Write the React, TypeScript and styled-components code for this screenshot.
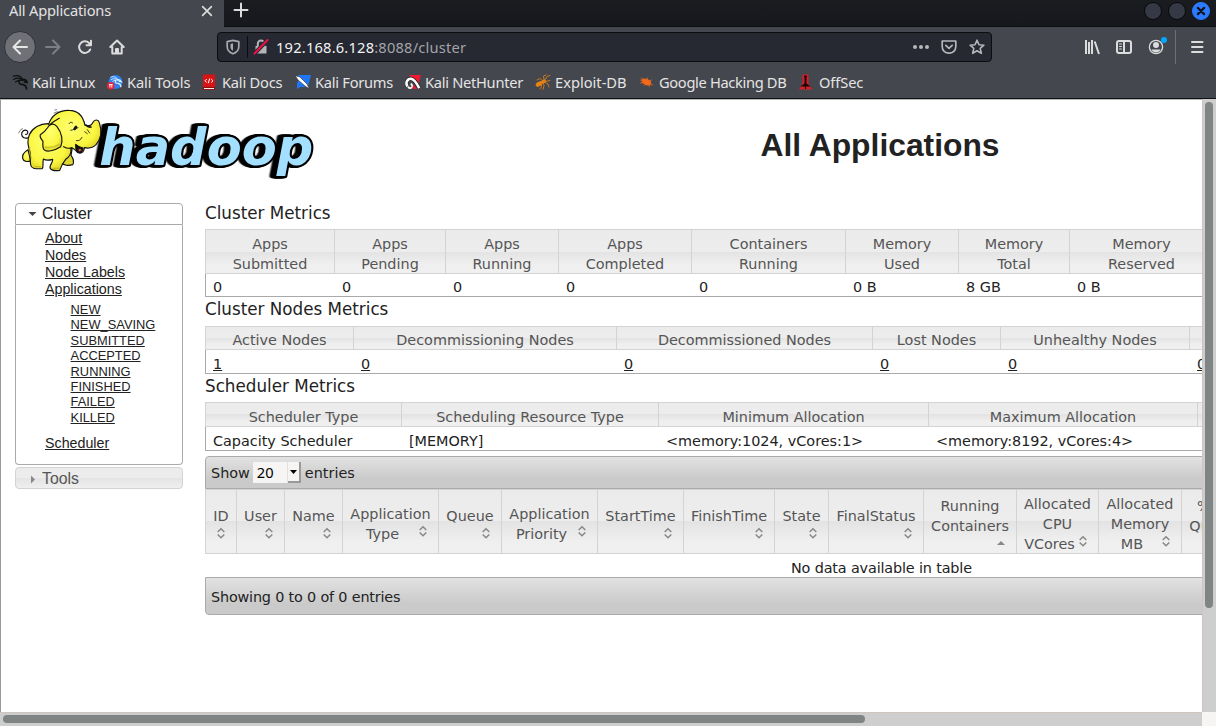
import React from "react";
import styled, { createGlobalStyle } from "styled-components";

const Global = createGlobalStyle`
  * { box-sizing: border-box; }
  body { margin: 0; background: #fff; overflow: hidden; }
`;

const UI = `"Noto Sans", sans-serif`;
const TABLE = `"DejaVu Sans", sans-serif`;
const SIDE = `"Liberation Sans", Arial, sans-serif`;

const Window = styled.div`
  width: 1216px;
  height: 726px;
  display: flex;
  flex-direction: column;
  overflow: hidden;
  font-family: ${UI};
`;

const TitleBar = styled.div`
  height: 27px;
  flex: none;
  display: flex;
  background: linear-gradient(#1b1c20, #17181d);
  border-bottom: 1px solid #0f1014;
`;

const Tab = styled.div`
  width: 224px;
  height: 27px;
  background: #44474e;
  color: #e2e2e2;
  font-size: 14.67px;
  letter-spacing: -0.18px;
  line-height: 20px;
  padding: 0 10px 0 9px;
  display: flex;
  justify-content: space-between;
  svg { margin-top: 4px; }
`;

const NewTab = styled.div`
  flex: 1;
  padding: 1px 0 0 9px;
`;

const WindowButtons = styled.div`
  display: flex;
  gap: 6px;
  padding: 2px 6px 0 0;
`;

const WinButton = styled.span<{ $close?: boolean }>`
  width: 18px;
  height: 18px;
  border-radius: 50%;
  background: ${(p) => (p.$close ? "#2a7bff" : "#353945")};
  border: 1px solid ${(p) => (p.$close ? "#2a7bff" : "#07080b")};
  display: flex;
  align-items: center;
  justify-content: center;
`;

const NavBar = styled.div`
  height: 40px;
  flex: none;
  display: flex;
  align-items: center;
  background: #44474e;
  padding-left: 4px;
`;

const BackButton = styled.span`
  width: 32px;
  height: 32px;
  border-radius: 50%;
  background: #6f7176;
  border: 1px solid #303237;
  display: flex;
  align-items: center;
  justify-content: center;
`;

const NavIcon = styled.span<{ $ml: number }>`
  display: flex;
  margin-left: ${(p) => p.$ml}px;
`;

const UrlBar = styled.div`
  width: 775px;
  height: 30px;
  margin-left: 92px;
  display: flex;
  align-items: center;
  background: #262832;
  border: 1px solid #0d0e12;
  border-radius: 4px;
  color: #a3a4a8;
  font-size: 14.67px;
  padding: 0 6px 0 7px;
`;

const UrlSep = styled.i`
  width: 1px;
  height: 22px;
  margin: 0 5px 0 6px;
  background: #0c0d11;
`;

const Url = styled.span`
  flex: 1;
  margin-left: 7px;
  letter-spacing: 0.2px;
  white-space: nowrap;
  b { font-weight: 400; color: #f3f3f4; }
`;

const ToolSep = styled.i`
  width: 1px;
  height: 34px;
  margin-left: 8px;
  background: #6d6f74;
`;

const Bookmarks = styled.div`
  height: 32px;
  flex: none;
  display: grid;
  grid-template-columns: 95px 95px 93px 110px 130px 104px 160px 80px;
  align-items: center;
  padding: 0 0 1px 12px;
  background: #44474e;
  border-bottom: 1px solid #101114;
`;

const Bookmark = styled.span<{ $track: number }>`
  display: flex;
  align-items: center;
  gap: 4px;
  color: #e4e4e4;
  font-size: 14.67px;
  letter-spacing: ${(p) => p.$track}px;
  line-height: 20px;
  white-space: nowrap;
`;

const Viewport = styled.div`
  flex: 1;
  min-height: 0;
  display: grid;
  grid-template-columns: 1202px 14px;
  grid-template-rows: 1fr 14px;
`;

const Page = styled.div`
  overflow: hidden;
  background: #fff;
  border-left: 1px solid #999;
  border-top: 1px solid #b5b5b5;
`;

const Track = styled.div<{ $dir: "v" | "h" }>`
  background: #cecece;
  border: 0 solid #cdc5be;
  border-width: ${(p) => (p.$dir === "v" ? "0 0 0 1px" : "1px 0 0 0")};
  padding: ${(p) => (p.$dir === "v" ? "3px 3px 0 2px" : "2px 0 3px 3px")};
`;

const Corner = styled.div`
  background: #f6f5f3;
`;

const Thumb = styled.div<{ $dir: "v" | "h" }>`
  width: ${(p) => (p.$dir === "v" ? "8px" : "862px")};
  height: ${(p) => (p.$dir === "v" ? "506px" : "8px")};
  border-radius: 4px;
  background: #7f8484;
`;

const Header = styled.header`
  height: 103px;
  display: flex;
  padding: 5px 0 0 15px;
`;

const Title = styled.h1`
  width: 358px;
  margin: 22px 0 0 381px;
  text-align: center;
  font: bold 31.8px/37px ${SIDE};
  color: #222;
  white-space: nowrap;
`;

const Body = styled.div`
  display: flex;
  align-items: flex-start;
`;

const Sidebar = styled.nav`
  width: 168px;
  flex: none;
  margin: 0 22px 0 14px;
  font-family: ${SIDE};
  color: #222;
`;

const PanelHead = styled.div<{ $open?: boolean }>`
  height: 22px;
  display: flex;
  align-items: center;
  gap: 5px;
  padding: ${(p) => (p.$open ? 0 : 2)}px 0 0 12px;
  font-size: 15.8px;
  line-height: 20px;
  border: 1px solid ${(p) => (p.$open ? "#aaa" : "#d3d3d3")};
  border-radius: ${(p) => (p.$open ? "4px 4px 0 0" : "4px")};
  color: ${(p) => (p.$open ? "#212121" : "#555")};
  background: ${(p) =>
    p.$open ? "#fff" : "linear-gradient(#ececec 50%, #e4e4e4 50%, #efefef)"};
`;

const PanelBody = styled.div`
  height: 240px;
  margin-bottom: 2px;
  padding: 5px 0 0 29px;
  border: 1px solid #aaa;
  border-top: 0;
  border-radius: 0 0 4px 4px;
`;

const SideLink = styled.a`
  display: block;
  font-size: 14.25px;
  line-height: 17px;
  text-decoration: underline;
  white-space: nowrap;
`;

const SubLinks = styled.div`
  padding: 4px 0 10px 25.6px;
`;

const SubLink = styled(SideLink)`
  font-size: 12.85px;
  line-height: 15.4px;
`;

const Main = styled.main`
  flex: none;
  width: 1100px;
  font: 14.4px/20px ${TABLE};
  color: #222;
`;

const Heading = styled.h3<{ $h: number; $pad: number }>`
  height: ${(p) => p.$h}px;
  margin: 0;
  padding-top: ${(p) => p.$pad}px;
  font: 16.75px/20px ${TABLE};
`;

const Grid = styled.div<{ $cols: string }>`
  display: grid;
  grid-template-columns: ${(p) => p.$cols};
`;

const HeadCell = styled.div<{ $pad: number; $h: number }>`
  height: ${(p) => p.$h}px;
  padding: ${(p) => p.$pad}px 7px 0;
  border: 1px solid #d3d3d3;
  border-right: 0;
  background: linear-gradient(#ebebeb, #ededed 50%, #e3e3e3 50%, #efefef 80%, #f0f0f0);
  color: #555;
  text-align: center;
  white-space: nowrap;
`;

const Cell = styled.div<{ $h: number; $pad: number }>`
  height: ${(p) => p.$h}px;
  padding: ${(p) => p.$pad}px 0 0 8px;
  border-bottom: 1px solid #aaa;
  white-space: nowrap;
  &:nth-child(1 of &) { border-left: 1px solid #aaa; padding-left: 7px; }
`;

const Bar = styled.div<{ $foot?: boolean }>`
  height: ${(p) => (p.$foot ? 38 : 33)}px;
  margin-top: ${(p) => (p.$foot ? 0 : 5)}px;
  padding-left: 5px;
  padding-top: ${(p) => (p.$foot ? 1 : 0)}px;
  letter-spacing: ${(p) => (p.$foot ? -0.18 : 0)}px;
  display: flex;
  align-items: center;
  border: 1px solid #aaa;
  border-radius: ${(p) => (p.$foot ? "0 0 0 4px" : "4px 0 0 0")};
  background: linear-gradient(#e2e2e2, #cacaca 72%, #cacaca);
`;

const Select = styled.span`
  width: 48px;
  height: 21px;
  margin: 0 4px 0 3px;
  display: flex;
  background: #e3e1de;
  color: #000;
`;

const SelectValue = styled.span`
  width: 34px;
  padding-left: 4px;
  background: #f6f5f3;
  font: 14.67px/21px ${UI};
`;

const SelectButton = styled.span`
  width: 13px;
  margin-left: 1px;
  display: flex;
  align-items: center;
  justify-content: center;
  background: #f6f5f3;
  border-right: 2px solid #999;
  border-bottom: 2px solid #999;
`;

const LastLine = styled.div`
  display: flex;
  span { flex: 1; }
  svg { margin-top: -1px; flex: none; }
`;

const IconLine = styled.div`
  display: flex;
  justify-content: flex-end;
  margin-top: -1px;
`;

const Empty = styled.div`
  height: 23px;
  padding: 4px 0 0 586px;
  letter-spacing: -0.15px;
  white-space: nowrap;
`;

const LogoText = styled.text`
  font: oblique bold 154px "DejaVu Sans", sans-serif;
  fill: #a3dfff;
  stroke: #000;
  stroke-width: 13px;
  stroke-linejoin: round;
  paint-order: stroke;
  filter: drop-shadow(-5px 0 0 #000) drop-shadow(-5px 0 0 #000) drop-shadow(-4px 0 0 #000);
`;

const SortIcon = ({ up }: { up?: boolean }) => (
  <svg width="16" height="16" viewBox="0 0 16 16">
    {up ? (
      <path d="M4 10 8 6l4 4z" fill="#888" />
    ) : (
      <path d="M4.7 7 8 3.7 11.3 7M4.7 9.5 8 12.8l3.3-3.3" fill="none" stroke="#888" strokeWidth="1.5" />
    )}
  </svg>
);

type Metric = { name: string[]; value: string; link?: boolean };

const m = (name: string, value: string, link?: boolean): Metric => ({
  name: name.split("|"),
  value,
  link,
});

const clusterMetrics = [
  m("Apps|Submitted", "0"), m("Apps|Pending", "0"), m("Apps|Running", "0"),
  m("Apps|Completed", "0"), m("Containers|Running", "0"), m("Memory|Used", "0 B"),
  m("Memory|Total", "8 GB"), m("Memory|Reserved", "0 B"),
];
const nodeMetrics = [
  m("Active Nodes", "1", true), m("Decommissioning Nodes", "0", true),
  m("Decommissioned Nodes", "0", true), m("Lost Nodes", "0", true),
  m("Unhealthy Nodes", "0", true), m("", "0", true),
];
const schedulerMetrics = [
  m("Scheduler Type", "Capacity Scheduler"), m("Scheduling Resource Type", "[MEMORY]"),
  m("Minimum Allocation", "<memory:1024, vCores:1>"),
  m("Maximum Allocation", "<memory:8192, vCores:4>"), m("", ""),
];

const MetricsTable = ({ cols, data, pad, headH, cellH, cellPad }: {
  cols: string; data: Metric[]; pad: number; headH: number; cellH: number; cellPad: number;
}) => (
  <Grid $cols={cols}>
    {data.map((d, i) => (
      <HeadCell key={i} $pad={pad} $h={headH}>
        {d.name.map((line, j) => <div key={j}>{line}</div>)}
      </HeadCell>
    ))}
    {data.map((d, i) => (
      <Cell key={i} $h={cellH} $pad={cellPad}>
        {d.link ? <u>{d.value}</u> : d.value}
      </Cell>
    ))}
  </Grid>
);

const appColumns: { lines: string[]; pad: number; below?: boolean; up?: boolean }[] = [
  { lines: ["ID"], pad: 16, below: true },
  { lines: ["User"], pad: 16, below: true },
  { lines: ["Name"], pad: 16, below: true },
  { lines: ["Application", "Type"], pad: 14 },
  { lines: ["Queue"], pad: 16, below: true },
  { lines: ["Application", "Priority"], pad: 14 },
  { lines: ["StartTime"], pad: 16, below: true },
  { lines: ["FinishTime"], pad: 16, below: true },
  { lines: ["State"], pad: 16, below: true },
  { lines: ["FinalStatus"], pad: 16, below: true },
  { lines: ["Running", "Containers"], pad: 6, below: true, up: true },
  { lines: ["Allocated", "CPU", "VCores"], pad: 4 },
  { lines: ["Allocated", "Memory", "MB"], pad: 4 },
  { lines: ["% of", "Queue"], pad: 6, below: true },
];

const HadoopLogo = () => (
  <svg width="304" height="80" viewBox="48 24 912 240" overflow="visible">
    <defs>
      <radialGradient id="skin" cx="0.45" cy="0.4" r="0.6">
        <stop offset="0" stopColor="#ffff72" />
        <stop offset="0.75" stopColor="#faf63f" />
        <stop offset="1" stopColor="#e2d92c" />
      </radialGradient>
    </defs>
    <LogoText x="298" y="205" textLength="642" lengthAdjust="spacingAndGlyphs">hadoop</LogoText>
    <g fill="url(#skin)" stroke="#111" strokeWidth="3.5" strokeLinejoin="round" strokeLinecap="round">
      <path d="M84 122c-8 4-18 0-19-9-1-10 9-17 16-12 5 4 2 12-4 11" fill="none" />
      <path d="M62 98l-6 10M68 95l-4 2" fill="none" strokeWidth="1.5" />
      <path d="M84 158c-10 6-18 16-16 26 2 9 14 12 24 7z" />
      <path d="M190 160c5 15 2 28-5 36 5 10 21 11 33 7 5-8 1-20-5-28l4-24z" fill="#ded72f" />
      <path d="M144 80c-24 0-46 12-56 33-9 21-3 38 2 52 3 13-1 25 2 39 2 10 10 12 34 11 6-4 1-12 4-29 8 5 18 4 28 1 1 8-7 15-8 23 0 9 11 13 29 10 5-14 10-23 18-33 14-9 17-17 16-29l-11-59z" />
      <path
        stroke="none"
        d="M146 82c8-26 30-43 61-42 25 0 42 16 48 45 10 4 19 1 24-9 5-10 16-9 19 1 8 24 5 49-10 66-8 8-22 12-35 9-1 15-12 20-21 12-8-5-11-10-16-12-8 3-17 2-25-3-15 2-30 1-41-3z"
      />
      <path
        fill="none"
        d="M146 82c8-26 30-43 61-42 25 0 42 16 48 45 10 4 19 1 24-9 5-10 16-9 19 1 8 24 5 49-10 66-8 8-22 12-35 9-1 15-12 20-21 12-8-5-11-10-16-12-8 3-17 2-25-3"
      />
      <path d="M227 142c1 13-1 19 5 24 7 5 16-2 17-13-8-1-15-5-22-11z" fill="#111" />
      <path d="M234 160c3-6 7-6 11-2-3 6-7 7-11 2z" fill="#e45a40" strokeWidth="1" />
      <path d="M178 64c-13 7-26 12-36 29-7 11-13 15-21 20-3 8 4 15 8 20-1 9-2 18 3 25 8 9 31 3 50-9 8-17 4-41-11-60-6-7-15-9-22-4" />
      <path d="M207 80c3-5 8-6 11-2M212 100c8 0 12-7 22-8M254 104l8 6M262 98l7 10M246 121c-4 8-9 11-17 10" fill="none" strokeWidth="2.4" />
      <path d="M172 44l-10 4M170 38l-6 1" fill="none" strokeWidth="1.5" />
      <ellipse cx="226" cy="93" rx="4" ry="7" transform="rotate(35 226 93)" fill="#111" strokeWidth="1" />
      <path d="M258 84c4 5 9 7 15 6" strokeWidth="5" fill="none" />
    </g>
    <g fill="none" stroke="#b6ad28" strokeWidth="4" opacity=".7">
      <path d="M94 185c-4-12-7-25-5-36M104 209h19M158 214h20M135 150c15 4 30 0 43-8" />
    </g>
  </svg>
);

const Dragon = ({ color = "#111" }: { color?: string }) => (
  <g fill="none" stroke={color} strokeLinecap="round">
    <path d="M1 2.2c5-1.500 8 0 9.500 3.500M1.500 5.500C5 3.500 8 4 10.500 5.700M3.500 8C6 6 8 5.500 11 6.500" strokeWidth="1.200" />
    <path d="M10 5.500c3-.5 4.500 1 5.300 3l-3-.7M7.500 6.500C6 9.500 8 10.300 11 10.600c2.500.5 3.500 2 3.500 4.400" strokeWidth="1.700" />
  </g>
);

const icons: Record<string, React.ReactNode> = {
  linux: <Dragon />,
  tools: (
    <>
      <circle cx="8.500" cy="8" r="7" fill="#2d7ff2" />
      <g transform="translate(3 1.500) scale(.75)"><Dragon color="#d9edff" /></g>
      <circle cx="3.800" cy="11.800" r="3.800" fill="#e5283b" />
      <path d="M2 10.500h3.600M2.900 10.500v3M4.800 10.500v3" stroke="#fff" strokeWidth=".9" />
    </>
  ),
  docs: (
    <>
      <path d="M1 .5h12v15H1z" fill="#d91313" />
      <path d="M1 13h12v2.500H1z" fill="#8e0d0d" />
      <path d="M2 14.500h10" stroke="#eee" />
      <path d="M4.800 5 3 6.800l1.800 1.800M9.200 5 11 6.800 9.200 8.600M7.700 4.500 6.300 9.200" fill="none" stroke="#fff" />
    </>
  ),
  forums: (
    <>
      <path d="M3 1h13l-3 12H3z" fill="#2077f5" />
      <path d="M0 1.500 5 3l7 7 2.500 5L10 12 3 6z" fill="#fff" stroke="#222" strokeWidth=".6" />
      <path d="m2 8 5 4-5 3z" fill="#2077f5" />
    </>
  ),
  hunter: (
    <>
      <path d="M4 1h12l-3 10-4-3z" fill="#f01832" />
      <path d="M2.500 12.500C0 8.500 2.500 4.500 6 4.800c3.500.3 6 5 8.200 9.400" fill="none" stroke="#222" strokeWidth="4" />
      <path d="M2.500 12.500C0 8.500 2.500 4.500 6 4.800c3.500.3 6 5 8.200 9.400" fill="none" stroke="#fff" strokeWidth="2.600" />
      <path d="M3 13c2 2 4 1 4.500-1L6 9.500" fill="none" stroke="#fff" strokeWidth="1.800" />
      <path d="m8 10.500 4.500 4.500-5-.3z" fill="#f01832" />
    </>
  ),
  exploit: (
    <g stroke="#e88413" fill="#e88413" strokeLinecap="round">
      <ellipse cx="4" cy="10" rx="3" ry="1.800" transform="rotate(-25 4 10)" />
      <ellipse cx="8.500" cy="7.500" rx="2" ry="1.200" transform="rotate(-30 8.500 7.500)" />
      <path d="M8 7 5 4.500 2 6M9 6 8.500 2 11 1M10 6l2-3.500 3-1M10 7.500l5-1M9.500 8l3.500 2 1 3M8 8.500l1 3-1 4M6 10l.5 2.500L5 15" fill="none" strokeWidth=".8" />
    </g>
  ),
  ghdb: (
    <g stroke="#f2691c" fill="#f2691c" strokeLinecap="round">
      <ellipse cx="7.500" cy="8" rx="4.500" ry="2.400" transform="rotate(25 7.500 8)" />
      <path d="M5 6 2.500 4M8 6l.5-2M10 7l2.500-1M4 8.500l-2.500.5M7 10l-1.500 1.500M10 10l.5 2.500M11 9.500l2.500 1.500M4.500 6.500 1.500 6" strokeWidth=".8" />
    </g>
  ),
  offsec: (
    <>
      <path d="M3.500.5h6V10l3.500 5.500H0L3.500 10z" fill="#d81e2a" />
      <path d="M6.500 1.500v9M4.500 11.500h4L6.500 10z" stroke="#1a0505" strokeWidth="2" />
      <path d="M5 2.500h3M6.500 12v3" stroke="#1a0505" strokeWidth="1.200" />
    </>
  ),
};

const bookmarks: [string, string, number][] = [
  ["linux", "Kali Linux", -0.28], ["tools", "Kali Tools", -0.1], ["docs", "Kali Docs", -0.22],
  ["forums", "Kali Forums", -0.27], ["hunter", "Kali NetHunter", -0.29], ["exploit", "Exploit-DB", 0],
  ["ghdb", "Google Hacking DB", -0.34], ["offsec", "OffSec", -0.1],
];

const Stroke = ({ d, color = "#dcdcdc", w = 2, size = 16, children }: {
  d: string; color?: string; w?: number; size?: number; children?: React.ReactNode;
}) => (
  <svg width={size} height={size} viewBox="0 0 16 16" fill="none" stroke={color} strokeWidth={w} strokeLinecap="round" strokeLinejoin="round">
    <path d={d} />
    {children}
  </svg>
);

export default function App() {
  return (
    <Window>
      <Global />
      <TitleBar>
        <Tab>
          All Applications
          <Stroke d="m3 3 10 10m0-10-10 10" size={14} w={1.9} />
        </Tab>
        <NewTab><Stroke d="M8 1.500v13M1.500 8h13" /></NewTab>
        <WindowButtons>
          <WinButton />
          <WinButton />
          <WinButton $close>
            <Stroke d="m3 3 10 10M13 3 3 13" size={10} w={3.6} color="#10131c" />
          </WinButton>
        </WindowButtons>
      </TitleBar>
      <NavBar>
        <BackButton><Stroke d="M15 8H2M8 1.500 1.500 8 8 14.500" color="#e6e6e6" /></BackButton>
        <NavIcon $ml={9}><Stroke d="M1 8h13M8 1.500 14.500 8 8 14.500" color="#7d7f84" /></NavIcon>
        <NavIcon $ml={16}><Stroke d="M13.200 10.500A5.800 5.800 0 1 1 12 4l1.800 1.800M14 1.800V6.300H9.500" /></NavIcon>
        <NavIcon $ml={16}>
          <Stroke d="M1.300 8 8 1.500 14.700 8M3.300 8v6.500h9.400V8M7 14v-4h2v4" />
        </NavIcon>
        <UrlBar>
          <Stroke d="M8 1.300 13.800 2.600v5c0 3.700-2.200 6-5.800 7.200-3.600-1.200-5.800-3.500-5.800-7.200v-5z" w={1.700} color="#a9abb0">
            <path d="M8 4.300 5.500 4.900v3c0 1.700.8 3 2.500 3.800z" fill="#a9abb0" stroke="none" />
          </Stroke>
          <UrlSep />
          <svg width="16" height="16" viewBox="0 0 16 16">
            <path d="M2.500 7h11v7.500h-11z" fill="#b3b4b7" />
            <path d="M4.800 7V4.800a3.200 3.200 0 0 1 6.400 0V7" fill="none" stroke="#b3b4b7" strokeWidth="2" />
            <path d="M1.500 14.500 14.500 1" stroke="#262832" strokeWidth="4" />
            <path d="M1.500 14.500 14.500 1" stroke="#ee1144" strokeWidth="2" strokeLinecap="round" />
          </svg>
          <Url><b>192.168.6.128</b>:8088/cluster</Url>
          <svg width="16" height="16" viewBox="0 0 16 16" fill="#b6b7bb">
            <circle cx="2" cy="8" r="2" /><circle cx="8" cy="8" r="2" /><circle cx="14" cy="8" r="2" />
          </svg>
          <NavIcon $ml={12}>
            <Stroke d="M1.200 2h13.600v5.500c0 4-3 6.700-6.800 6.700s-6.800-2.700-6.800-6.700zM4.800 6.300 8 9.300l3.200-3" color="#b6b7bb" w={1.700} />
          </NavIcon>
          <NavIcon $ml={12}>
            <Stroke d="m8 1.200 2 4.500 4.900.5-3.700 3.200 1.100 4.900L8 11.800l-4.300 2.500 1.100-4.900L1.100 6.200 6 5.700z" color="#b6b7bb" w={1.600} />
          </NavIcon>
        </UrlBar>
        <NavIcon $ml={92}>
          <svg width="16" height="16" viewBox="0 0 16 16" stroke="#dcdcdc" strokeWidth="2">
            <path d="M2 1v14M5 3v12M8 1v14M10.700 2.500 15 15" />
          </svg>
        </NavIcon>
        <NavIcon $ml={16}>
          <Stroke d="M3 2h10q2 0 2 2v8q0 2-2 2H3q-2 0-2-2V4q0-2 2-2zM8 2v12">
            <path d="M3.500 5H5.500M3.500 7.500H5.500M3.500 10H5.500" strokeWidth="1" />
          </Stroke>
        </NavIcon>
        <NavIcon $ml={15}>
          <svg width="20" height="22" viewBox="0 0 20 22">
            <circle cx="9" cy="11" r="6.600" fill="none" stroke="#dcdcdc" strokeWidth="1.300" />
            <circle cx="9" cy="9" r="3" fill="#dcdcdc" />
            <path d="M4.500 13.500h9c-1 2.200-2.800 3-4.500 3s-3.500-.8-4.500-3z" fill="#dcdcdc" />
            <circle cx="17" cy="4" r="3" fill="#00a8ff" />
          </svg>
        </NavIcon>
        <ToolSep />
        <NavIcon $ml={13}><Stroke d="M3 3h10.500M3 8h10.500M3 13h10.500" w={2} /></NavIcon>
      </NavBar>
      <Bookmarks>
        {bookmarks.map(([id, label, track]) => (
          <Bookmark key={id} $track={track}>
            <svg width="16" height="16" viewBox="0 0 16 16">{icons[id]}</svg>
            {label}
          </Bookmark>
        ))}
      </Bookmarks>
      <Viewport>
        <Page>
          <Header>
            <HadoopLogo />
            <Title>All Applications</Title>
          </Header>
          <Body>
            <Sidebar>
              <PanelHead $open>
                <svg width="9" height="6" viewBox="0 0 9 6"><path d="M.5 1h8l-4 4z" fill="#444" /></svg>
                Cluster
              </PanelHead>
              <PanelBody>
                {["About", "Nodes", "Node Labels", "Applications"].map((t) => (
                  <SideLink key={t}>{t}</SideLink>
                ))}
                <SubLinks>
                  {["NEW", "NEW_SAVING", "SUBMITTED", "ACCEPTED", "RUNNING", "FINISHED", "FAILED", "KILLED"].map((t) => (
                    <SubLink key={t}>{t}</SubLink>
                  ))}
                </SubLinks>
                <SideLink>Scheduler</SideLink>
              </PanelBody>
              <PanelHead>
                <svg width="9" height="9" viewBox="0 0 9 9"><path d="M3 .5v8l4-4z" fill="#888" /></svg>
                Tools
              </PanelHead>
            </Sidebar>
            <Main>
              <Heading $h={26} $pad={0}>Cluster Metrics</Heading>
              <MetricsTable cols="129px 111px 113px 133px 154px 113px 111px 144px" data={clusterMetrics} pad={4} headH={45} cellH={23} cellPad={3} />
              <Heading $h={29} $pad={2}>Cluster Nodes Metrics</Heading>
              <MetricsTable cols="148px 263px 256px 128px 189px 116px" data={nodeMetrics} pad={3} headH={24} cellH={24} cellPad={4} />
              <Heading $h={28} $pad={2}>Scheduler Metrics</Heading>
              <MetricsTable cols="196px 257px 270px 269px 108px" data={schedulerMetrics} pad={4} headH={25} cellH={24} cellPad={4} />
              <Bar>
                Show
                <Select>
                  <SelectValue>20</SelectValue>
                  <SelectButton>
                    <svg width="7" height="4" viewBox="0 0 7 4"><path d="M0 0h7L3.500 4z" /></svg>
                  </SelectButton>
                </Select>
                entries
              </Bar>
              <Grid $cols="31px 48px 58px 96px 63px 96px 86px 91px 54px 95px 93px 82px 83px 63px">
                {appColumns.map((c, i) => {
                  const head = c.below ? c.lines : c.lines.slice(0, -1);
                  return (
                    <HeadCell key={i} $pad={c.pad} $h={65}>
                      {head.map((l) => <div key={l}>{l}</div>)}
                      {c.below ? (
                        <IconLine><SortIcon up={c.up} /></IconLine>
                      ) : (
                        <LastLine><span>{c.lines[c.lines.length - 1]}</span><SortIcon /></LastLine>
                      )}
                    </HeadCell>
                  );
                })}
              </Grid>
              <Empty>No data available in table</Empty>
              <Bar $foot>Showing 0 to 0 of 0 entries</Bar>
            </Main>
          </Body>
        </Page>
        <Track $dir="v"><Thumb $dir="v" /></Track>
        <Track $dir="h"><Thumb $dir="h" /></Track>
        <Corner />
      </Viewport>
    </Window>
  );
}
